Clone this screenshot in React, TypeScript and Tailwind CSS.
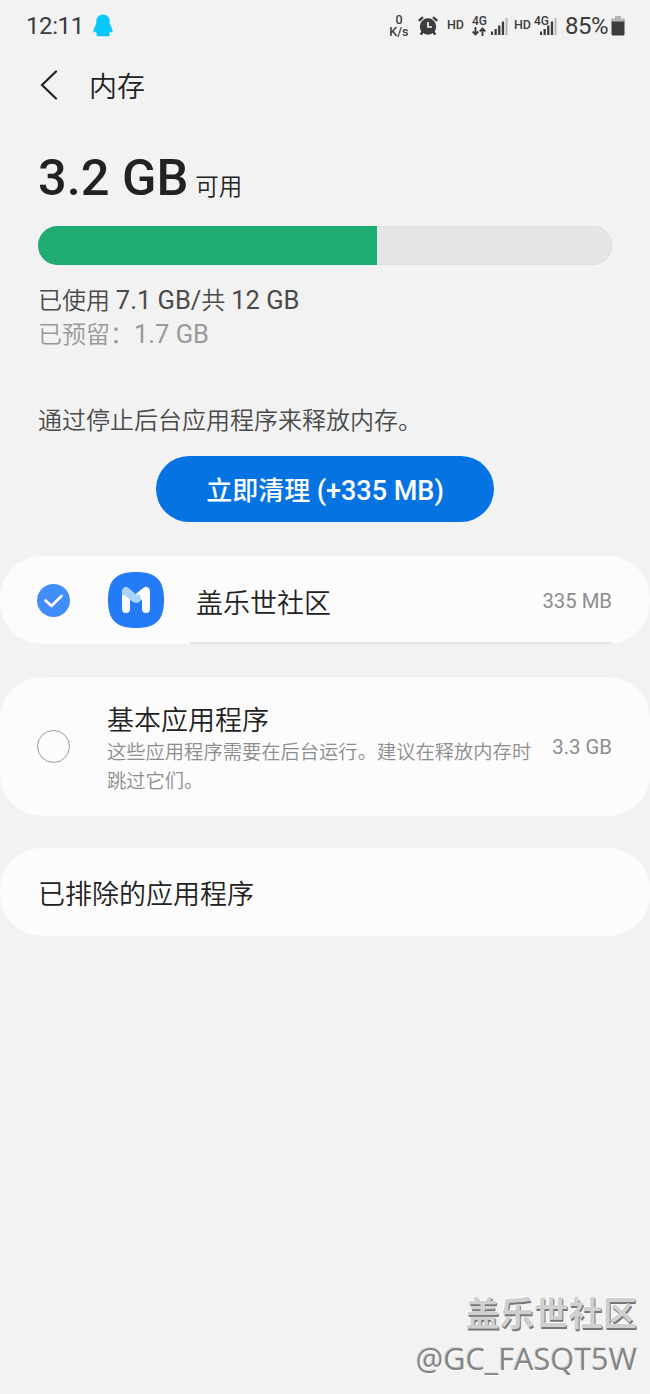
import type { ReactNode } from "react";

function QQIcon() {
  return (
    <svg width="20" height="24" viewBox="0 0 20 24" fill="#08c8fb">
      <path d="M10 .5C6 .5 3.300 3.500 3.300 7.300v2.500C2 12 .9 14.600.5 16.700c-.2 1.400.1 1.800.6 1.700.5-.1 1.100-.5 1.600-1 .3 1.100.9 2 1.600 2.700-.8.3-1.200.8-1 1.400.2.6.9.8 1.900.8h9.600c1 0 1.700-.2 1.900-.8.2-.6-.2-1.100-1-1.400.7-.7 1.300-1.600 1.600-2.700.5.500 1.100.9 1.600 1 .5.100.8-.3.600-1.700-.4-2.100-1.500-4.700-2.800-6.900V7.300C16.700 3.500 14 .5 10 .5Z" />
    </svg>
  );
}

function AlarmIcon() {
  return (
    <svg width="20" height="20" viewBox="0 0 20 20" fill="none">
      <circle cx="10" cy="10.500" r="8.200" fill="#3c3c3c" />
      <path d="M.8 4.900 5 1.200M19.200 4.900 15 1.200" stroke="#3c3c3c" strokeWidth="2.400" />
      <path d="M4.800 15.500 2.700 18.700M15.200 15.500l2.100 3.200" stroke="#3c3c3c" strokeWidth="2.400" />
      <path d="M10 6v5h4" stroke="#f2f2f2" strokeWidth="1.700" />
    </svg>
  );
}

function SignalIcon() {
  return (
    <svg width="17" height="18" viewBox="0 0 17 18" fill="#3c3c3c">
      <path d="M0 14.500h2V18H0zM3.500 12h2.300v6H3.500zM7.100 8.500h2.300V18H7.100zM10.800 4.500h2.300V18h-2.300z" />
      <path d="M14.500 1h2v17h-2z" fill="#b5b5b5" />
    </svg>
  );
}

function TransferIcon() {
  return (
    <svg width="14" height="9" viewBox="0 0 14 9" fill="none" stroke="#3c3c3c" strokeWidth="1.900">
      <path d="M3.500 0v7.300M.7 4.500l2.800 2.900 2.800-2.900M10.500 9V1.500M7.700 4.400l2.800-2.900 2.800 2.900" />
    </svg>
  );
}

function BatteryIcon() {
  return (
    <svg width="14" height="20" viewBox="0 0 14 20">
      <path d="M4 0h6v2.500h3q1 0 1 1V6H0V3.500q0-1 1-1h3z" fill="#b5b5b5" />
      <path d="M.5 5.500h13V18q0 1.500-1.500 1.500H2Q.5 19.500.5 18z" fill="#3c3c3c" />
    </svg>
  );
}

function CommunityIcon() {
  return (
    <svg width="56" height="56" viewBox="0 0 56 56" fill="none" strokeWidth="8" strokeLinecap="round" strokeLinejoin="round">
      <path d="M28 0C48 0 56 8 56 28s-8 28-28 28S0 48 0 28 8 0 28 0Z" fill="#237bf7" />
      <path d="M18 20v17M28.500 26.500 38 19v18" stroke="#fdfdfd" />
      <path d="m18 19 7.500 6.500q2 1.500 3.500.8" stroke="#a8d4fb" />
      <path d="M14 19v4l8 1-4-5z" fill="#a8d4fb" />
    </svg>
  );
}

function Card({ className, children }: { className: string; children: ReactNode }) {
  return <section className={`flex w-full shrink-0 rounded-[42px] bg-[#fcfcfc] ${className}`}>{children}</section>;
}

export default function App() {
  return (
    <main className="flex h-[1394px] w-[650px] flex-col overflow-hidden whitespace-nowrap bg-[#f2f2f2] font-['Roboto','Noto_Sans_CJK_SC',sans-serif] font-[350] text-[#222]">
      <header className="flex h-[52px] shrink-0 items-center pl-[26px] pr-[25px] text-[#3c3c3c]">
        <span className="w-[67px] text-2xl font-normal leading-[52px] tracking-[-0.4px]">12:11</span>
        <QQIcon />
        <div className="ml-auto flex h-full items-center">
          <div className="mr-[9px] flex w-5 flex-col items-center text-[12.500px] font-medium leading-[12px]">
            <span>0</span>
            <span>K/s</span>
          </div>
          <AlarmIcon />
          <span className="-mt-0.5 ml-[9px] w-[25px] text-[12.500px] font-medium leading-4">HD</span>
          <div className="flex w-[19px] flex-col items-start text-[12px] font-medium leading-[11px]">
            <span>4G</span>
            <TransferIcon />
          </div>
          <SignalIcon />
          <span className="-mt-0.5 ml-[6px] w-5 text-[12.500px] font-medium leading-4">HD</span>
          <div className="flex items-center">
            <span className="-mr-[9px] mb-2.5 text-[12px] font-medium leading-3">4G</span>
            <SignalIcon />
          </div>
          <span className="ml-[8px] mr-[3px] text-2xl font-normal tracking-[-0.5px]">85%</span>
          <BatteryIcon />
        </div>
      </header>

      <div className="flex h-[68px] shrink-0 items-center pl-10">
        <svg className="-mt-0.5" width="18" height="30" viewBox="0 0 18 30" fill="none" stroke="#222" strokeWidth="2.200" strokeLinecap="round">
          <path d="M16 1.500 2 15l14 13.500" />
        </svg>
        <h1 className="ml-[31px] pt-[4px] text-[28px] leading-[68px]">内存</h1>
      </div>

      <section className="flex shrink-0 flex-col px-[38px]">
        <div className="flex h-[106px] items-baseline pt-[28px]">
          <span className="text-[50.500px] font-medium leading-[60px]">3.2 GB</span>
          <span className="ml-[7px] text-[23.500px] leading-[60px]">可用</span>
        </div>
        <div className="flex h-[39px] overflow-hidden rounded-full bg-[#e6e6e6] shadow-[inset_0_0_0_1px_#dedede]">
          <div className="w-[339px] bg-[#1fac73]" />
        </div>
        <p className="mt-[18px] h-[34px] text-2xl leading-[34px] text-[#4a4a4a]">已使用 <span className="text-[25.500px] font-normal">7.1 GB/</span>共 <span className="text-[25.500px] font-normal">12 GB</span></p>
        <p className="h-[34px] text-2xl leading-[34px] text-[#999]">已预留：<span className="text-[25.500px] font-normal">1.7 GB</span></p>
        <p className="mt-[53px] h-[34px] text-[24px] leading-[34px] text-[#4a4a4a]">通过停止后台应用程序来释放内存。</p>
        <button className="mt-[18px] h-[66px] w-[338px] self-center rounded-full bg-[#0573e1] pt-[4px] text-[26px] font-medium text-white">
          立即清理 <span className="text-[27px]">(+335 MB)</span>
        </button>
      </section>

      <Card className="mt-[34px] h-[88px] items-center pl-[37px] pr-[38px]">
        <svg width="33" height="33" viewBox="0 0 33 33" fill="none">
          <circle cx="16.500" cy="16.500" r="16.500" fill="#418dfa" />
          <path d="m8.500 16.500 6 5.500 10-10" stroke="#fff" strokeWidth="2.600" strokeLinecap="round" strokeLinejoin="round" />
        </svg>
        <div className="ml-[38px]"><CommunityIcon /></div>
        <div className="ml-[26px] flex h-full flex-1 items-center justify-between border-b-2 border-[#e5e5e5] pl-[6px]">
          <span className="pt-[10px] text-[27px]">盖乐世社区</span>
          <span className="pt-[4px] text-[20.300px] font-normal text-[#8d8d8d]">335 MB</span>
        </div>
      </Card>

      <Card className="mt-[33px] h-[139px] items-center pl-[37px] pr-[38px]">
        <span className="h-[33px] w-[33px] shrink-0 rounded-full border-[1.500px] border-[#999]" />
        <div className="ml-[37px] flex flex-1 flex-col pt-[7px]">
          <h2 className="h-[33px] text-[27px] leading-[33px]">基本应用程序</h2>
          <p className="text-[19.300px] leading-[29px] text-[#8d8d8d]">
            这些应用程序需要在后台运行。建议在释放内存时<br />跳过它们。
          </p>
        </div>
        <span className="pt-px text-[20.300px] font-normal text-[#8d8d8d]">3.3 GB</span>
      </Card>

      <Card className="mt-8 h-[88px] items-center px-[38px]">
        <h2 className="pt-[7px] text-[27px]">已排除的应用程序</h2>
      </Card>

      <footer className="mt-auto flex flex-col items-end pb-[13px] pr-[13px]">
        <span className="text-[34.300px] font-bold leading-[42px] text-[#d0d0d0] [text-shadow:1px_2px_0_#777,-1px_-1px_0_#fff]">盖乐世社区</span>
        <span className="font-['Open_Sans','Noto_Sans',sans-serif] text-[30.700px] font-normal leading-[46px] text-[#858585] [text-shadow:-1px_-1px_0_#d8d8d8,1px_1px_0_#fff]">@GC_FASQT5W</span>
      </footer>
    </main>
  );
}
